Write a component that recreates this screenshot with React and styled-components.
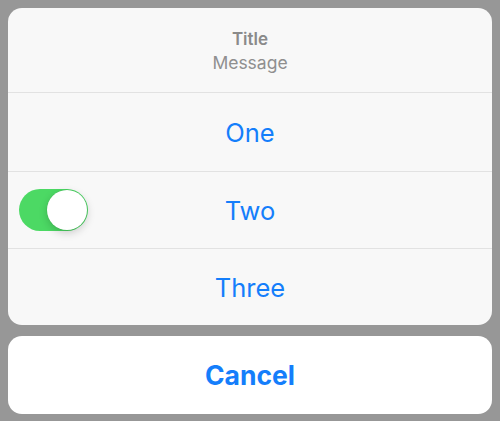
import React, { useState } from "react"
import styled, { createGlobalStyle } from "styled-components"

const GlobalStyle = createGlobalStyle`
  html, body {
    margin: 0;
    padding: 0;
    background: #979797;
  }
  body {
    font-family: Inter, "Noto Sans", "Liberation Sans", sans-serif;
    -webkit-font-smoothing: antialiased;
  }
`

const Sheet = styled.div`
  width: 500px;
  height: 421px;
  box-sizing: border-box;
  padding: 8px 8px 7px 8px;
  display: flex;
  flex-direction: column;
  gap: 11px;
`

const Group = styled.div`
  background: ${props => props.bg || "#f8f8f8"};
  border-radius: 14px;
  overflow: hidden;
  display: flex;
  flex-direction: column;
`

const Header = styled.div`
  height: 84px;
  display: flex;
  flex-direction: column;
  align-items: center;
  justify-content: center;
  gap: 3px;
  padding-top: 2px;
  box-sizing: border-box;
`

const Title = styled.div`
  font-size: 17px;
  font-weight: 600;
  color: #8a8a8a;
`

const Message = styled.div`
  font-size: 17.5px;
  color: #8f8f8f;
`

const Row = styled.div`
  position: relative;
  height: ${props => props.h || 77}px;
  border-top: 1px solid #e2e2e2;
  box-sizing: border-box;
  display: flex;
  align-items: center;
  justify-content: center;
  font-size: 25.5px;
  color: #147efb;
  cursor: pointer;
`

const CancelRow = styled(Row)`
  border-top: none;
  height: 78px;
  font-weight: 650;
  font-size: 26.5px;
`

const Track = styled.button`
  position: absolute;
  left: 11px;
  top: 50%;
  transform: translateY(-50%);
  width: 69px;
  height: 42px;
  border-radius: 21px;
  border: none;
  padding: 0;
  background: ${props => (props.on ? "#4cd964" : "#e5e5e5")};
  cursor: pointer;
`

const Knob = styled.span`
  position: absolute;
  top: 1px;
  left: ${props => (props.on ? "28px" : "1px")};
  width: 40px;
  height: 40px;
  border-radius: 50%;
  background: #fff;
  box-shadow: 0 3px 8px rgba(0, 0, 0, 0.18), 0 0 0 0.5px rgba(0, 0, 0, 0.08);
`

const Switch = ({ on, onToggle }) => (
  <Track on={on} onClick={onToggle}>
    <Knob on={on} />
  </Track>
)

export default function App() {
  const [on, setOn] = useState(true)
  return (
    <>
      <GlobalStyle />
      <Sheet>
        <Group>
          <Header>
            <Title>Title</Title>
            <Message>Message</Message>
          </Header>
          <Row h={79}>One</Row>
          <Row>
            <Switch on={on} onToggle={() => setOn(!on)} />
            Two
          </Row>
          <Row>Three</Row>
        </Group>
        <Group bg="#ffffff">
          <CancelRow>Cancel</CancelRow>
        </Group>
      </Sheet>
    </>
  )
}
